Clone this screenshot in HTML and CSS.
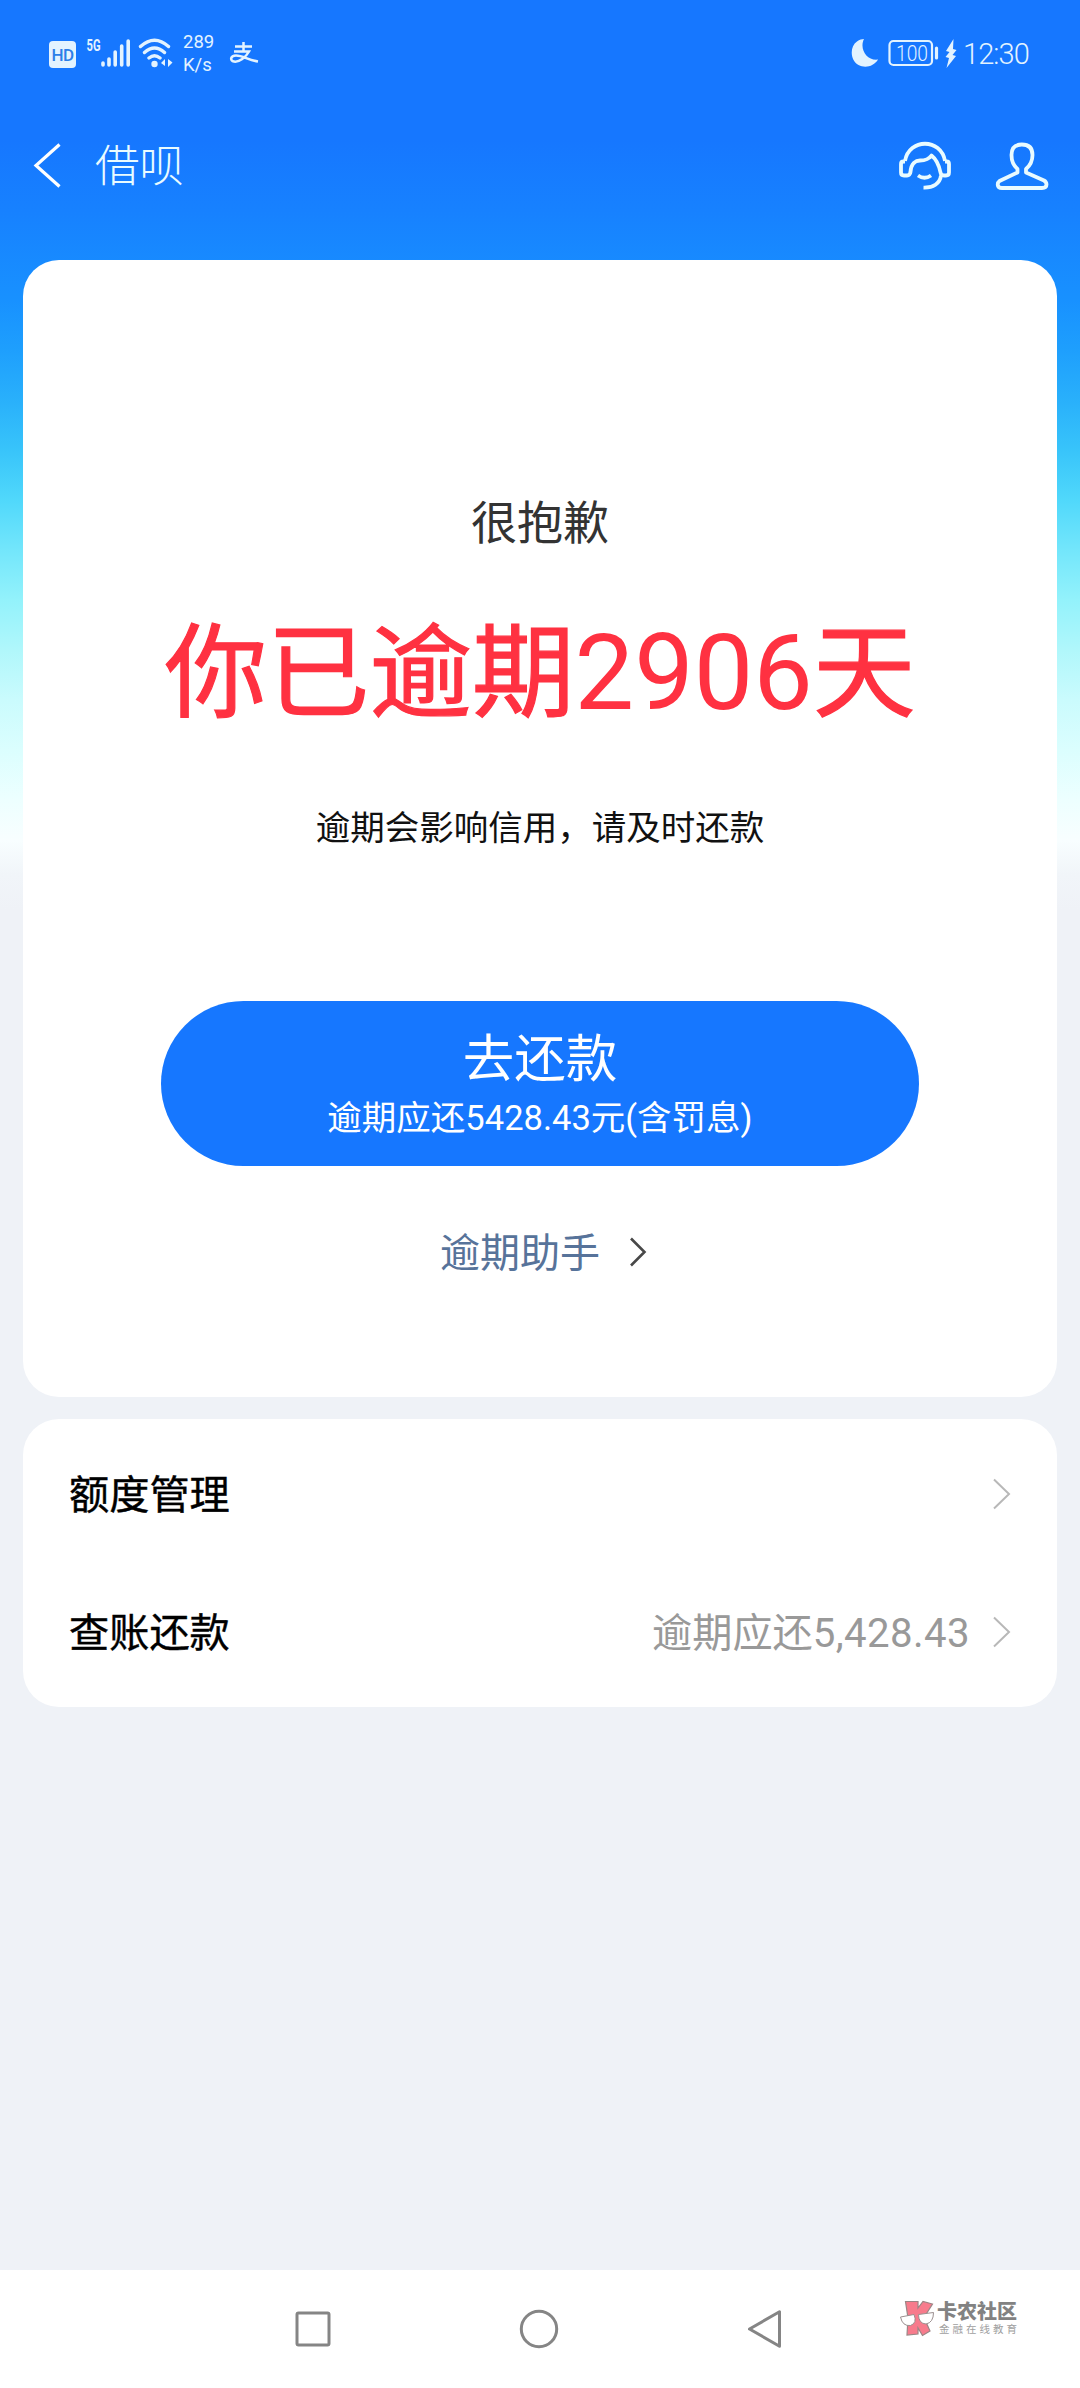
FILE: index.html
```html
<!DOCTYPE html>
<html lang="zh-CN">
<head>
<meta charset="utf-8">
<title>借呗</title>
<link rel="stylesheet" href="styles.css">
</head>
<body>
<div class="screen">
  <div class="status">
    <div class="status-left">
      <span class="hd">HD</span>
      <svg class="signal" width="46" height="36" viewBox="85 35 46 36">
        <text x="86.500" y="51" class="g5" textLength="14" lengthAdjust="spacingAndGlyphs">5G</text>
        <path d="M103 63v2M109 59v6M115.200 52v13M121.700 46v19M128.200 41v24" fill="none" stroke="currentColor" stroke-width="3.600" stroke-linecap="round"/>
      </svg>
      <svg class="wifi" width="36" height="32" viewBox="138 37 36 32">
        <path d="M140.500 46.500Q154.500 34 168.500 46.500M144.500 52.500Q154.500 43.500 164.500 52.500M149 58Q154.500 53.500 160 58" fill="none" stroke="currentColor" stroke-width="3.400" stroke-linecap="round"/>
        <circle cx="154.500" cy="64" r="3.200" fill="currentColor"/>
        <path d="M165 59v7l-4-3zM168 59v8l4.500-4.500z" fill="currentColor"/>
      </svg>
      <span class="speed">289<br>K/s</span>
      <svg class="zhi" width="30" height="24" viewBox="229 41 30 24">
        <path d="M235 46.500h17M243.500 42v9M234 51.500h15C246 57 239 62.500 234 61.500C229.500 60.500 230.500 55.500 236 55.500C243 55.500 248 60 258 61.500" fill="none" stroke="currentColor" stroke-width="2.500"/>
      </svg>
    </div>
    <div class="status-right">
      <svg width="28" height="30" viewBox="851 38 28 30">
        <path d="M864 39C859 49 867 61 878 59.500C874 66.500 865 68.500 858.500 65C850 60 849.500 46.500 857 41.500C859.500 39.700 862 39 864 39Z" fill="currentColor"/>
      </svg>
      <svg class="battery" width="52" height="32" viewBox="888 37 52 32">
        <rect x="889.500" y="41" width="42.500" height="24" rx="4" fill="none" stroke="currentColor" stroke-width="2.200"/>
        <path d="M936.500 48v10" stroke="currentColor" stroke-width="3.200" stroke-linecap="round"/>
        <text x="896" y="61" class="pct" textLength="32" lengthAdjust="spacingAndGlyphs">100</text>
      </svg>
      <svg class="bolt" width="14" height="32" viewBox="944 37 14 32">
        <path d="M953.500 39L946 51l3.500 1-4 5 3.500 1-2.500 10L956 56l-3.500-1 4-5-3.500-1z" fill="currentColor"/>
      </svg>
      <span class="clock">12:30</span>
    </div>
  </div>

  <div class="header">
    <svg class="back" width="30" height="48" viewBox="32 143 30 48">
      <path d="M59.500 145.500L36 166.500L59.500 187.500" fill="none" stroke="#fff" stroke-width="3.200"/>
    </svg>
    <h1 class="title">借呗</h1>
    <svg class="service" width="54" height="50" viewBox="899 141 54 50">
      <g fill="none" stroke="currentColor" stroke-width="3.800" stroke-linejoin="round">
        <path d="M906 161C910 138 942 138 946 161"/>
        <path d="M906 161.500h-1.500q-2.500 0-2.500 2.500v8.500q0 3 3 3h3q3 0 3.500-3.500C912 163 917 160.500 921 160.500Q929 160.500 932.500 155.500C937 159 940 165 941.500 172.500Q942 175.500 945 175.500h2q3 0 3-3v-8.500q0-2.500-2.500-2.500H946"/>
        <path d="M919 175.500Q925.500 180 932 175.500M942 175.500C941 183.500 934 188 924.500 187.700"/>
      </g>
    </svg>
    <svg class="person" width="56" height="52" viewBox="995 140 56 52">
      <path d="M1022.800 144.500C1015 144.500 1012.500 149 1012.500 155C1012.500 161 1015 166 1018.500 169V172.500L1000.500 181Q998.500 182.500 998.800 185Q999 188 1003 188H1043Q1047.500 188 1047.500 184.500Q1047.500 182 1045 180.500L1027 172.500V169C1030.500 166 1033.500 161 1033.500 155C1033.500 149 1030.500 144.500 1022.800 144.500Z" fill="none" stroke="currentColor" stroke-width="3.800" stroke-linejoin="round"/>
    </svg>
  </div>

  <main class="content">
    <section class="card notice">
      <p class="sorry">很抱歉</p>
      <p class="overdue">你已逾期<span class="num">2906</span>天</p>
      <p class="hint">逾期会影响信用，请及时还款</p>
      <div class="pay">
        <span class="pay-title">去还款</span>
        <span class="pay-sub">逾期应还<span class="num">5428.43</span>元<span class="num">(</span>含罚息<span class="num">)</span></span>
      </div>
      <div class="helper">
        <span class="helper-text">逾期助手</span>
        <svg width="20" height="32" viewBox="0 0 20 32"><path d="M3 2.500L16.500 16L3 29.500" fill="none" stroke="#484848" stroke-width="2.600"/></svg>
      </div>
    </section>
    <section class="card menu">
      <div class="row">
        <span class="label">额度管理</span>
        <svg class="arrow" width="20" height="32" viewBox="0 0 20 32"><path d="M2 1.500L17 16L2 30.500" fill="none" stroke="#b8b8b8" stroke-width="2"/></svg>
      </div>
      <div class="row">
        <span class="label">查账还款</span>
        <span class="value">逾期应还<span class="num">5,428.43</span></span>
        <svg class="arrow" width="20" height="32" viewBox="0 0 20 32"><path d="M2 1.500L17 16L2 30.500" fill="none" stroke="#b8b8b8" stroke-width="2"/></svg>
      </div>
    </section>
  </main>

  <nav class="nav">
    <svg width="40" height="40" viewBox="0 0 40 40"><rect x="4" y="4" width="32" height="32" rx="1.500" class="key"/></svg>
    <svg width="40" height="40" viewBox="0 0 40 40"><circle cx="20" cy="20" r="17.700" class="key"/></svg>
    <svg width="40" height="40" viewBox="0 0 40 40"><path d="M4.500 20L34.500 2.800V37.200Z" class="key"/></svg>
    <div class="mark">
      <svg width="34" height="38" viewBox="900 2300 34 38">
        <g fill="#f77b8c" stroke="#9b8585" stroke-width="1.200">
          <path d="M905.500 2301.500H918V2308L923 2301.500L932.500 2304L924 2317.500L930 2331L922.500 2335.500L918 2328V2334L907 2335L908 2318Z"/>
        </g>
        <g fill="#fff" stroke="#9b8f8f" stroke-width="1">
          <path d="M900.500 2317L914 2314.500Q917.500 2323 910.500 2325.500Q902.500 2326.500 900.500 2317Z"/>
          <path d="M918.500 2314.500L933.500 2312.500Q933.500 2322.500 926 2324Q918.500 2323.500 918.500 2314.500Z"/>
        </g>
      </svg>
      <div class="mark-text">
        <span class="mark-name">卡农社区</span>
        <span class="mark-sub">金融在线教育</span>
      </div>
    </div>
  </nav>
</div>
</body>
</html>
```

FILE: styles.css
```css
* {
  box-sizing: border-box;
}

body {
  margin: 0;
  font-family: "Noto Sans CJK SC", sans-serif;
}

p,
h1 {
  margin: 0;
}

svg {
  display: block;
  flex: none;
}

.screen {
  width: 1080px;
  height: 2388px;
  display: flex;
  flex-direction: column;
  overflow: hidden;
  background:
    linear-gradient(to bottom, #1677ff 0, #1677ff 140px, #1781ff 210px, #1891ff 300px, #1e9ffd 350px, #29b0fb 400px, #38c4fa 450px, #50d8fb 500px, #73e6fb 550px, #93f2fb 600px, #b0f7fb 650px, #cafbfd 700px, #dbfefe 750px, #edffff 800px, #f8feff 840px, #f1f5f9 875px, #eff2f7 910px, #eff2f7 100%);
}

.num {
  font-family: Roboto, sans-serif;
  line-height: 0;
}

.status {
  height: 106px;
  display: flex;
  justify-content: space-between;
  align-items: center;
  padding: 0 47px 0 49px;
  color: #e3f3ff;
}

.status-left,
.status-right {
  display: flex;
  align-items: center;
}

.hd {
  width: 27px;
  height: 27px;
  margin-top: 2px;
  border-radius: 4px;
  background: #e3f3ff;
  color: #2c7fe8;
  font: 500 17px/28px Roboto, sans-serif;
  letter-spacing: -0.500px;
  text-align: center;
}

.signal {
  margin-left: 9px;
}

.wifi {
  margin-left: 7px;
}

.speed {
  margin-left: 9px;
  width: 33px;
  font: 18.500px/23px Roboto, sans-serif;
  padding-top: 2px;
}

.zhi {
  margin-left: 13px;
}

.g5 {
  font: bold 16px Roboto, sans-serif;
  fill: currentColor;
}

.battery {
  margin-left: 9px;
}

.pct {
  font: 300 22px Roboto, sans-serif;
  fill: currentColor;
}

.bolt {
  margin-left: 4px;
}

.clock {
  width: 70px;
  margin-left: 5px;
  padding-top: 2px;
  font: 300 29px/40px Roboto, sans-serif;
  letter-spacing: -0.900px;
  white-space: nowrap;
}

.header {
  height: 154px;
  display: flex;
  align-items: center;
  padding: 0 30px 34px 32px;
  color: #e9fbff;
}

.title {
  margin-left: 33px;
  padding-bottom: 6px;
  font-size: 44.500px;
  line-height: 60px;
  font-weight: 300;
}

.service {
  margin-left: auto;
}

.person {
  margin-left: 42px;
}

.content {
  flex: 1;
  padding: 0 23px;
  display: flex;
  flex-direction: column;
  gap: 22px;
}

.card {
  background: #fff;
  border-radius: 36px;
}

.notice {
  height: 1137px;
  padding-top: 225px;
  display: flex;
  flex-direction: column;
  align-items: center;
  white-space: nowrap;
}

.sorry {
  font-size: 46px;
  line-height: 68px;
  color: #333;
}

.overdue {
  margin-top: 37px;
  font-size: 102.500px;
  line-height: 150px;
  color: #ff3141;
  -webkit-text-stroke: 1.200px #ff3141;
}

.overdue .num {
  font-size: 106px;
  -webkit-text-stroke: 0;
}

.hint {
  margin-top: 60px;
  font-size: 34.500px;
  line-height: 50px;
  color: #111;
}

.pay {
  margin-top: 151px;
  width: 758px;
  height: 165px;
  border-radius: 83px;
  background: #1677ff;
  color: #fff;
  display: flex;
  flex-direction: column;
  align-items: center;
  padding-top: 18px;
}

.pay-title {
  font-size: 51.500px;
  line-height: 72px;
}

.pay-sub {
  font-size: 34.500px;
  line-height: 49px;
}

.helper {
  margin-top: 56px;
  padding-left: 8px;
  display: flex;
  align-items: center;
  gap: 28px;
  font-size: 40px;
  line-height: 60px;
  color: #57739a;
}

.helper-text {
  padding-bottom: 4px;
  line-height: 56px;
}

.menu {
  height: 288px;
  padding: 6px 45px 0 46px;
}

.row {
  height: 138px;
  display: flex;
  align-items: center;
}

.label {
  padding-bottom: 6px;
  font-size: 40.200px;
  color: #000;
  -webkit-text-stroke: 0.400px #000;
}

.value {
  margin-left: auto;
  padding-bottom: 6px;
  font-size: 40.200px;
  color: #999;
}

.value .num {
  letter-spacing: 0.400px;
}

.arrow {
  margin-left: auto;
}

.value + .arrow {
  margin-left: 22px;
}

.nav {
  position: relative;
  height: 118px;
  background: #fff;
  display: flex;
  align-items: center;
  justify-content: space-between;
  padding: 0 295px 0 293px;
}

.key {
  fill: none;
  stroke: #858585;
  stroke-width: 3;
  stroke-linejoin: round;
}

.mark {
  position: absolute;
  left: 900px;
  top: 30px;
  display: flex;
  gap: 3px;
  white-space: nowrap;
}

.mark-text {
  display: flex;
  flex-direction: column;
}

.mark-name {
  font-size: 20px;
  line-height: 22px;
  font-weight: 900;
  color: #828282;
}

.mark-sub {
  padding-left: 2px;
  font-size: 10.500px;
  line-height: 14px;
  letter-spacing: 3px;
  color: #a0a0a0;
}
```
